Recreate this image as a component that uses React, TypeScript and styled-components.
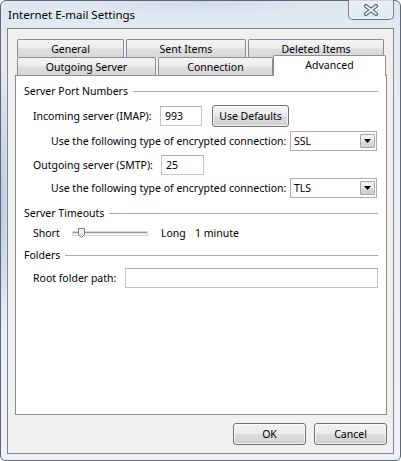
import styled, { createGlobalStyle, css } from "styled-components";

const uiFont = `"Noto Sans", "Open Sans", sans-serif`;

const GlobalStyle = createGlobalStyle`
  html {
    -webkit-text-size-adjust: none;
    text-size-adjust: none;
  }
  html, body { margin: 0; padding: 0; background: #fff; }
  body { font-family: ${uiFont}; font-size: 10.5px; color: #000; }
  * { box-sizing: border-box; }
`;

const Window = styled.div`
  width: 401px;
  height: 461px;
  display: flex;
  flex-direction: column;
  padding: 0 6px 6px;
  border: 1px solid #5f6873;
  border-radius: 6px 6px 5px 5px;
  background:
    radial-gradient(ellipse 14px 140px at 0 200px, rgba(140, 170, 210, 0.55), transparent),
    radial-gradient(ellipse 120px 14px at 200px 0, rgba(190, 205, 225, 0.5), transparent),
    linear-gradient(180deg, #dfe7f0 0%, #e8eef5 40%, #eef2f7 100%);
`;

const TitleBar = styled.div`
  height: 27px;
  display: flex;
  justify-content: space-between;
  align-items: flex-start;
`;

const Caption = styled.span`
  margin: 6px 0 0 1px;
  font-size: 11.5px;
  line-height: 16px;
`;

const CloseButton = styled.div`
  width: 46px;
  height: 20px;
  margin-top: -1px;
  border: 1px solid #6f7884;
  border-top: none;
  border-radius: 0 0 5px 5px;
  background: linear-gradient(180deg, rgba(255, 255, 255, 0.35), rgba(225, 233, 243, 0.7));
  box-shadow: inset 0 0 0 1px rgba(255, 255, 255, 0.55);
  display: flex;
  align-items: center;
  justify-content: center;
`;

const Client = styled.div`
  flex: 1;
  display: flex;
  flex-direction: column;
  padding: 10px 6px 0 7px;
  border: 1px solid #858585;
  background: #f0f0f0;
`;

const TabRow = styled.div`
  display: flex;
  gap: 2px;
  height: 18px;
  padding: 0 2px;
`;

const Tab = styled.div<{ $w: number; $active?: boolean }>`
  flex: none;
  width: ${(p) => p.$w}px;
  height: 18px;
  border: 1px solid #898c95;
  border-bottom: none;
  border-radius: 2px 2px 0 0;
  background: linear-gradient(180deg, #f4f4f4 0%, #ececec 48%, #dedede 52%, #d7d7d7 100%);
  display: flex;
  align-items: center;
  justify-content: center;
  white-space: nowrap;
  ${(p) =>
    p.$active &&
    css`
      position: relative;
      z-index: 1;
      width: ${p.$w + 4}px;
      height: 21px;
      margin: -2px -2px 0;
      padding-bottom: 3px;
      background: #fff;
    `}
`;

const Panel = styled.div`
  height: 340px;
  border: 1px solid #898c95;
  background: #fff;
  padding: 7px 8px 0 8px;
  display: flex;
  flex-direction: column;
`;

const Legend = styled.div<{ $top: number }>`
  display: flex;
  align-items: center;
  gap: 5px;
  height: 16px;
  margin-top: ${(p) => p.$top}px;
  white-space: nowrap;
  &::after {
    content: "";
    flex: 1;
    height: 1px;
    background: #a8a8a8;
  }
`;

const Row = styled.div<{ $top: number; $indent: number }>`
  display: flex;
  align-items: center;
  height: 22px;
  margin-top: ${(p) => p.$top}px;
  padding-left: ${(p) => p.$indent}px;
  white-space: nowrap;
`;

const Label = styled.span<{ $w: number }>`
  flex: none;
  width: ${(p) => p.$w}px;
  min-width: 0;
`;

const TextBox = styled.input<{ $w: number }>`
  flex: none;
  width: ${(p) => p.$w}px;
  height: 20px;
  margin: 0;
  padding: 0 4px;
  border: 1px solid #c2c5cc;
  border-top-color: #abadb3;
  background: #fff;
  font: inherit;
  color: #000;
  outline: none;
`;

const PushButton = styled.button<{ $w: number; $ml?: number }>`
  flex: none;
  width: ${(p) => p.$w}px;
  height: 22px;
  margin: 0 0 0 ${(p) => p.$ml ?? 0}px;
  padding: 0;
  border: 1px solid #707070;
  border-radius: 3px;
  background: linear-gradient(180deg, #f2f2f2 0%, #ebebeb 48%, #dddddd 52%, #cfcfcf 100%);
  box-shadow: inset 0 0 0 1px rgba(255, 255, 255, 0.75);
  font: inherit;
  color: #000;
`;

const Combo = styled.div`
  flex: none;
  width: 87px;
  height: 20px;
  border: 1px solid #abadb3;
  background: #fff;
  display: flex;
  align-items: center;
  justify-content: space-between;
  padding: 0 1px 0 3px;
`;

const ComboArrow = styled.span`
  width: 15px;
  height: 14px;
  border: 1px solid #a6a6a6;
  border-radius: 1px;
  background: linear-gradient(180deg, #f2f2f2 0%, #ebebeb 48%, #dddddd 52%, #cfcfcf 100%);
  display: flex;
  align-items: center;
  justify-content: center;
`;

const Slider = styled.div`
  position: relative;
  flex: none;
  width: 74px;
  height: 12px;
  display: flex;
  align-items: center;
`;

const Track = styled.div`
  width: 100%;
  height: 3px;
  border-top: 1px solid #9a9a9a;
  border-bottom: 1px solid #ffffff;
  background: #e6e6e6;
  box-shadow: 0 0 0 1px #d6d6d6;
`;

const Thumb = styled.svg`
  position: absolute;
  left: 5px;
  top: 1px;
`;

const Footer = styled.div`
  display: flex;
  justify-content: flex-end;
  gap: 8px;
  margin-top: 8px;
`;

function DownArrow() {
  return (
    <svg width="7" height="4" viewBox="0 0 7 4">
      <path d="M0 0H7L3.5 4Z" fill="#000" />
    </svg>
  );
}

function EncryptionRow({ top, value }: { top: number; value: string }) {
  return (
    <Row $top={top} $indent={27}>
      <Label $w={239}>Use the following type of encrypted connection:</Label>
      <Combo>
        {value}
        <ComboArrow>
          <DownArrow />
        </ComboArrow>
      </Combo>
    </Row>
  );
}

export default function App() {
  return (
    <>
      <GlobalStyle />
      <Window>
        <TitleBar>
          <Caption>Internet E-mail Settings</Caption>
          <CloseButton>
            <svg width="16" height="12" viewBox="0 0 16 12">
              <path d="M3 2L13 10M13 2L3 10" stroke="#4e5866" strokeWidth="4" strokeLinecap="round" />
              <path d="M3 2L13 10M13 2L3 10" stroke="#eef1f5" strokeWidth="2" strokeLinecap="round" />
            </svg>
          </CloseButton>
        </TitleBar>

        <Client>
          <TabRow>
            <Tab $w={107}>General</Tab>
            <Tab $w={120}>Sent Items</Tab>
            <Tab $w={136}>Deleted Items</Tab>
          </TabRow>
          <TabRow>
            <Tab $w={139}>Outgoing Server</Tab>
            <Tab $w={115}>Connection</Tab>
            <Tab $w={109} $active>
              Advanced
            </Tab>
          </TabRow>

          <Panel>
            <Legend $top={0}>Server Port Numbers</Legend>
            <Row $top={6} $indent={9}>
              <Label $w={127}>Incoming server (IMAP):</Label>
              <TextBox $w={42} defaultValue="993" />
              <PushButton $w={77} $ml={10}>
                Use Defaults
              </PushButton>
            </Row>
            <EncryptionRow top={3} value="SSL" />
            <Row $top={2} $indent={9}>
              <Label $w={128}>Outgoing server (SMTP):</Label>
              <TextBox $w={43} defaultValue="25" />
            </Row>
            <EncryptionRow top={1} value="TLS" />

            <Legend $top={6}>Server Timeouts</Legend>
            <Row $top={1} $indent={9}>
              <Label $w={40}>Short</Label>
              <Slider>
                <Track />
                <Thumb width="7" height="10" viewBox="0 0 7 10">
                  <path d="M0.5 0.5H6.5V6.5L3.5 9.5L0.5 6.5Z" fill="#f1f1f1" stroke="#7a7a7a" />
                </Thumb>
              </Slider>
              <Label $w={14} />
              <Label $w={34}>Long</Label>
              <span>1 minute</span>
            </Row>

            <Legend $top={3}>Folders</Legend>
            <Row $top={4} $indent={9}>
              <Label $w={92}>Root folder path:</Label>
              <TextBox $w={253} />
            </Row>
          </Panel>

          <Footer>
            <PushButton $w={73}>OK</PushButton>
            <PushButton $w={73}>Cancel</PushButton>
          </Footer>
        </Client>
      </Window>
    </>
  );
}
